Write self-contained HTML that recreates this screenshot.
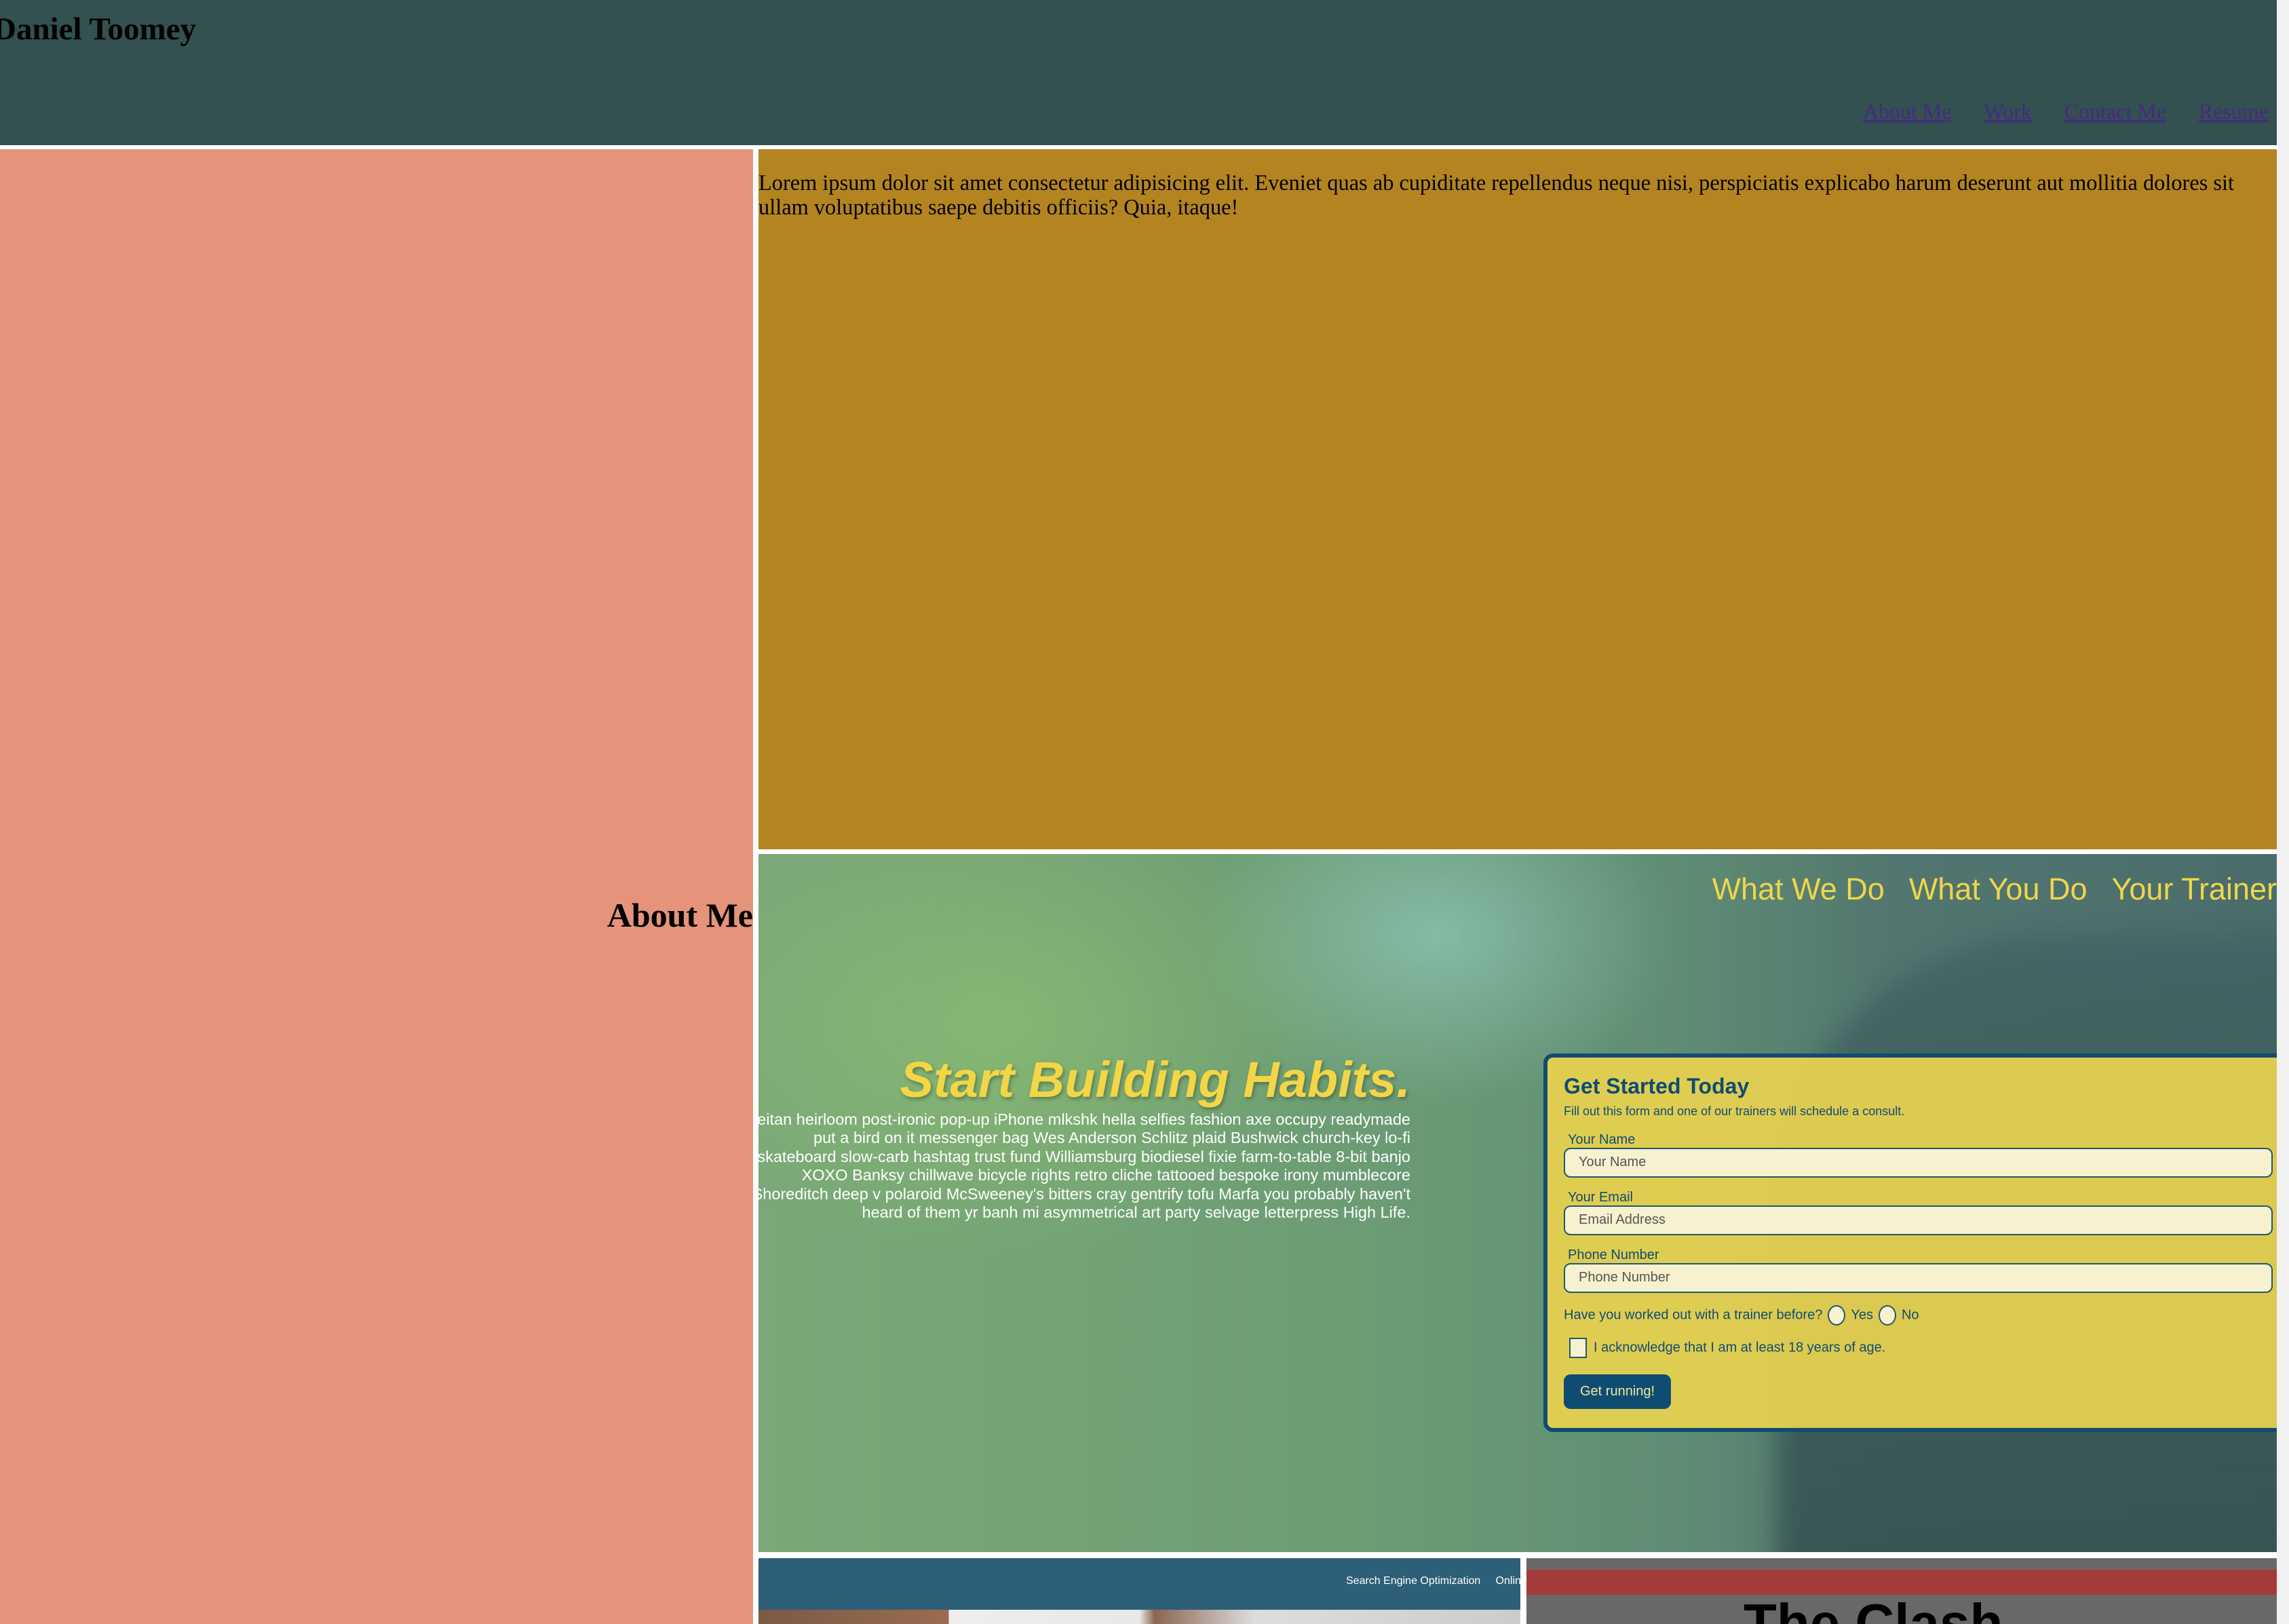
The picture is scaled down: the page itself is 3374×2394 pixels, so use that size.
<!DOCTYPE html>
<html><head><meta charset="utf-8"><style>
*{margin:0;padding:0;box-sizing:border-box}
html,body{width:3374px;height:2394px;overflow:hidden;background:#fff;font-family:"Liberation Serif",serif}
.sb{position:absolute;left:3356px;top:0;width:18px;height:2394px;background:#f1f1f1}
.hdr{position:absolute;left:0;top:0;width:3356px;height:214px;background:#325150}
.hdr h1{position:absolute;left:-10px;top:16px;font-size:47px;font-weight:bold;color:#000;white-space:nowrap}
.nav{position:absolute;right:12px;top:146px;font-size:32px;white-space:nowrap}
.nav a{color:#4a2785;text-decoration:underline;margin-left:48px}
.left{position:absolute;left:0;top:220px;width:1110px;height:2174px;background:#e5937b}
.left h2{position:absolute;right:0;top:1100px;font-size:50px;font-weight:bold;white-space:nowrap}
.gold{position:absolute;left:1118px;top:220px;width:2238px;height:1032px;background:#b48421;font-size:32.4px;line-height:36px;padding:32px 4px 0 0;color:#000}
.fit{position:absolute;left:1118px;top:1259px;width:2238px;height:1029px;overflow:hidden;
background:radial-gradient(ellipse 500px 350px at 350px 250px,rgba(150,200,110,.55),transparent),radial-gradient(ellipse 350px 250px at 1000px 120px,rgba(150,210,200,.6),transparent),linear-gradient(90deg,#7aa878 0%,#6c9c74 40%,#608d74 60%,#52766f 75%,#4a6d6b 100%);font-family:"Liberation Sans",sans-serif}
.person{position:absolute;left:1500px;top:120px;width:800px;height:1000px;background:linear-gradient(180deg,rgba(62,97,98,.7),rgba(53,80,79,.9));border-radius:400px 0 0 0;filter:blur(20px)}
.fnav{position:absolute;right:0;top:26px;color:#f0d64a;font-size:45px;white-space:nowrap}
.fnav span{margin-left:36px}
.hl{position:absolute;right:1277px;top:290px;color:#f3d646;font-size:74px;font-weight:bold;font-style:italic;white-space:nowrap;text-shadow:2px 3px 6px rgba(0,0,0,.3)}
.para{position:absolute;right:1277px;top:378px;color:#fff;font-size:23.5px;line-height:27.4px;text-align:right;white-space:nowrap}
.form{position:absolute;left:1157px;top:294px;width:1090px;height:558px;background:rgba(232,210,80,.93);border:6px solid #0f4c72;border-right:none;border-radius:14px 0 0 14px;color:#0f4c72;padding:0 0 0 24px}
.form h3{font-size:32px;margin-top:24px}
.form .sub{font-size:18px;margin-top:8px}
.form label{display:block;font-size:20px;margin:18px 0 0 6px}
.inp{width:1045px;height:44px;border:2px solid #1e5a6a;border-radius:10px;background:#f8f1cf;color:#555;font-size:20px;padding:8px 20px}
.rad{display:inline-block;width:26px;height:30px;border:2px solid #1e5a6a;border-radius:50%;background:#f8f1cf;vertical-align:middle;margin:0 8px}
.btn{display:inline-block;background:#0f4c72;color:#f3e6a0;font-size:20px;padding:14px 24px;border-radius:10px;margin-top:24px}
.t1{position:absolute;left:1118px;top:2297px;width:1123px;height:97px;background:#2d5f78;overflow:hidden}
.t1 .s{position:absolute;left:866px;top:25px;color:#fff;font-size:16px;white-space:nowrap;font-family:"Liberation Sans",sans-serif}
.t1 .img{position:absolute;left:0;top:76px;width:1123px;height:30px;background:linear-gradient(90deg,#7b5a44 0,#9a6c52 25%,#eee 25%,#e8e8e8 50%,#8a6652 52%,#ddd 65%,#ccc 100%)}
.t2{position:absolute;left:2250px;top:2297px;width:1106px;height:97px;background:#6a6866;overflow:hidden}
.t2 .red{position:absolute;left:0;top:17px;width:100%;height:37px;background:#a53a3a}
.t2 .tx{position:absolute;left:320px;top:50px;font-size:80px;font-weight:bold;font-family:"Liberation Sans",sans-serif;color:#000}
</style></head><body>
<div class="sb"></div>
<div class="hdr"><h1>Daniel Toomey</h1>
<div class="nav"><a>About Me</a><a>Work</a><a>Contact Me</a><a>Resume</a></div></div>
<div class="left"><h2>About Me</h2></div>
<div class="gold">Lorem ipsum dolor sit amet consectetur adipisicing elit. Eveniet quas ab cupiditate repellendus neque nisi, perspiciatis explicabo harum deserunt aut mollitia dolores sit ullam voluptatibus saepe debitis officiis? Quia, itaque!</div>
<div class="fit">
<div class="person"></div>
<div class="fnav"><span>What We Do</span><span>What You Do</span><span>Your Trainer</span></div>
<div class="hl">Start Building Habits.</div>
<div class="para">Seitan heirloom post-ironic pop-up iPhone mlkshk hella selfies fashion axe occupy readymade<br>put a bird on it messenger bag Wes Anderson Schlitz plaid Bushwick church-key lo-fi<br>skateboard slow-carb hashtag trust fund Williamsburg biodiesel fixie farm-to-table 8-bit banjo<br>XOXO Banksy chillwave bicycle rights retro cliche tattooed bespoke irony mumblecore<br>Shoreditch deep v polaroid McSweeney's bitters cray gentrify tofu Marfa you probably haven't<br>heard of them yr banh mi asymmetrical art party selvage letterpress High Life.</div>
<div class="form">
<h3>Get Started Today</h3>
<div class="sub">Fill out this form and one of our trainers will schedule a consult.</div>
<label style="margin-top:20px">Your Name</label><div class="inp">Your Name</div>
<label>Your Email</label><div class="inp">Email Address</div>
<label>Phone Number</label><div class="inp">Phone Number</div>
<div style="font-size:20px;margin-top:18px">Have you worked out with a trainer before?<span class="rad"></span>Yes<span class="rad"></span>No</div>
<div style="font-size:20px;margin-top:18px"><span style="display:inline-block;width:26px;height:30px;border:2px solid #1e5a6a;background:#f8f1cf;vertical-align:middle;margin:0 10px 0 8px"></span>I acknowledge that I am at least 18 years of age.</div>
<div class="btn">Get running!</div>
</div>
</div>
<div class="t1"><div class="s">Search Engine Optimization &nbsp;&nbsp;&nbsp; Online</div><div class="img"></div></div>
<div class="t2"><div class="red"></div><div class="tx">The Clash</div></div>
</body></html>
